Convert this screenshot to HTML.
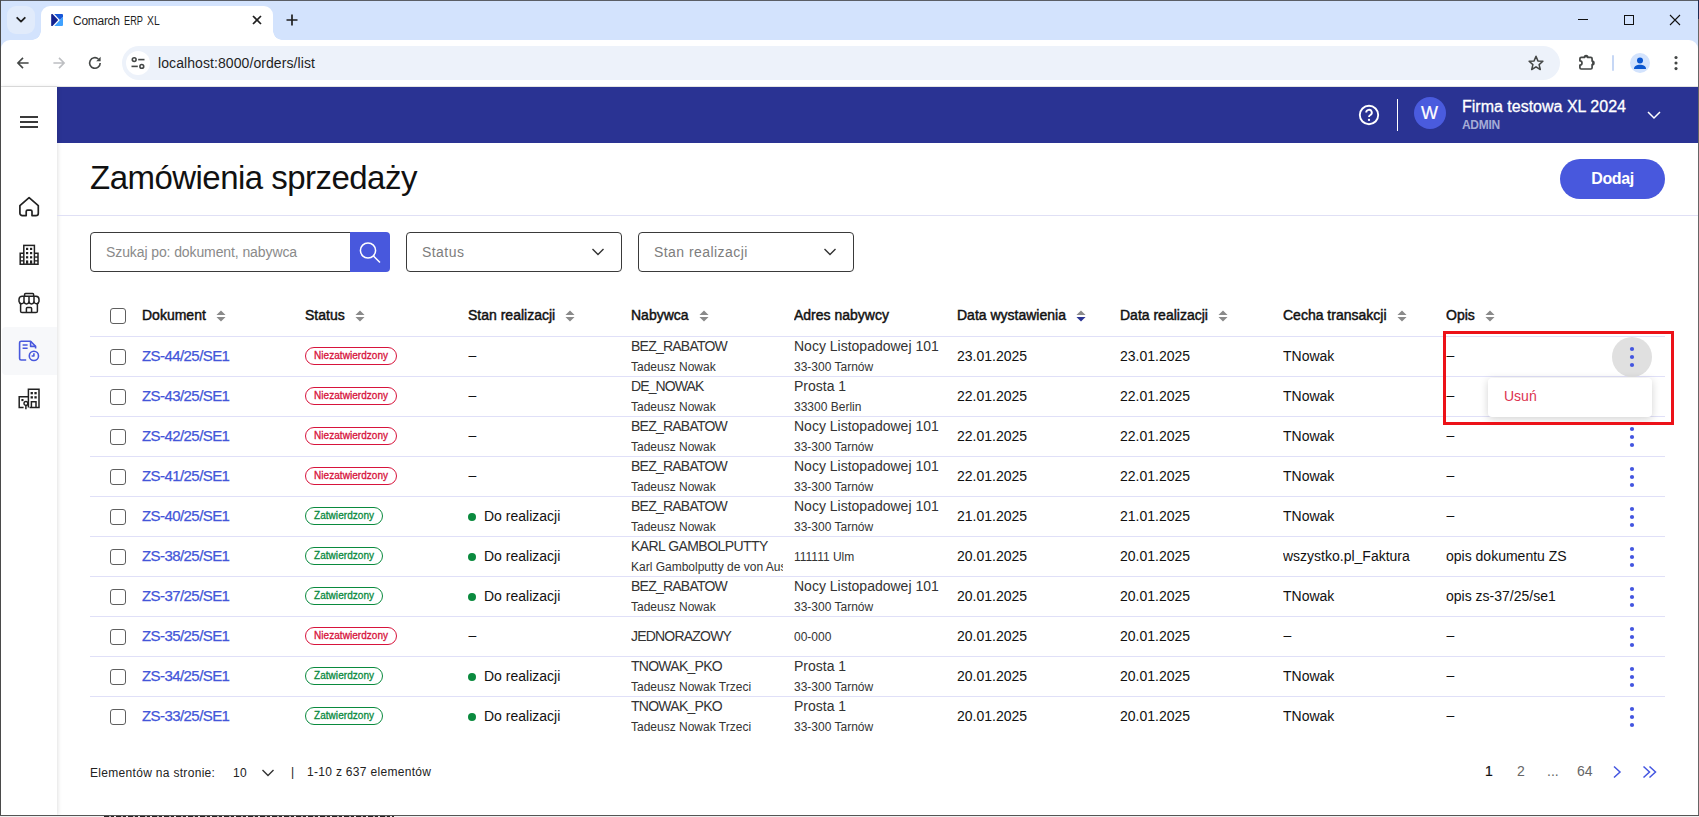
<!DOCTYPE html>
<html lang="pl">
<head>
<meta charset="utf-8">
<title>Comarch ERP XL</title>
<style>
*{box-sizing:border-box;margin:0;padding:0}
html,body{width:1699px;height:817px;overflow:hidden;background:#fff}
body{font-family:"Liberation Sans",sans-serif;position:relative;color:#111}
.abs{position:absolute}
/* window frame */
#frame-top{left:0;top:0;width:1699px;height:1px;background:#5a5e66}
#frame-left{left:0;top:0;width:1px;height:817px;background:#4a4a4a}
#frame-right{left:1698px;top:0;width:1px;height:817px;background:#666}
#frame-right2{left:1698px;top:0;width:1px;height:19px;background:#1b2b52}
#frame-bottom{left:0;top:815px;width:1699px;height:1px;background:#555}
#frame-bottom2{left:0;top:816px;width:1699px;height:1px;background:#f0f0f0}
/* browser chrome */
#tabstrip{left:1px;top:1px;width:1697px;height:50px;background:#d3e3fd}
#tabdd{left:7px;top:6px;width:28px;height:28px;border-radius:9px;background:#e1ebfb}
#tab{left:41px;top:6px;width:232px;height:34px;background:#fff;border-radius:9px 9px 0 0}
#tab:before,#tab:after{content:"";position:absolute;bottom:0;width:9px;height:9px}
#tab:before{left:-9px;background:radial-gradient(circle at 0 0,transparent 8.5px,#fff 9px)}
#tab:after{right:-9px;background:radial-gradient(circle at 100% 0,transparent 8.5px,#fff 9px)}
#tabtitle{left:73px;top:13px;font-size:12px;line-height:16px;color:#1f1f1f;white-space:nowrap}
#toolbar{left:1px;top:40px;width:1697px;height:46px;background:#fff;border-radius:9px 9px 0 0}
#toolbar-line{left:1px;top:86px;width:1697px;height:1px;background:#e3e3e3}
#urlpill{left:121.5px;top:46px;width:1438px;height:34px;border-radius:17px;background:#edf2fa}
#siteinfo{left:126px;top:51px;width:24px;height:24px;border-radius:12px;background:#fff}
#url{left:158px;top:54px;letter-spacing:.08px;font-size:14px;line-height:18px;color:#1f1f1f;white-space:nowrap}
/* app */
#sidebar{left:1px;top:87px;width:56px;height:728px;background:#fff;box-shadow:1px 0 4px rgba(0,0,0,.12)}
#side-active{left:2px;top:327px;width:55px;height:48px;background:#f7f8fa;border-radius:4px 0 0 4px}
#header{left:57px;top:87px;width:1641px;height:56px;background:#2a3393}
#title{left:90px;top:157px;font-size:33px;letter-spacing:-.53px;line-height:42px;color:#111;white-space:nowrap}
#hr{left:57px;top:215px;width:1641px;height:1px;background:#e0e0f5}

#avatar{left:1414px;top:97px;width:32px;height:32px;border-radius:16px;background:#4a5bde;color:#fff;font-size:18px;line-height:32px;text-align:center;-webkit-text-stroke:.2px #fff;padding-right:1px}
#firm{left:1462px;top:97px;-webkit-text-stroke:.3px #fff;font-size:16px;line-height:20px;color:#fff;white-space:nowrap}
#admin{left:1462px;top:118px;letter-spacing:-.3px;font-size:12px;line-height:14px;font-weight:bold;color:#a5abd6;white-space:nowrap}
#dodaj{left:1560px;top:159px;width:105px;height:40px;border-radius:20px;background:#4858dd;color:#fff;font-weight:bold;font-size:16px;line-height:40px;text-align:center;letter-spacing:-.4px}

#search{left:90px;top:232px;width:261px;height:40px;border:1px solid #3a3a3a;border-radius:4px 0 0 4px;font-size:14px;line-height:38px;padding-left:15px;color:#8a8a8a;white-space:nowrap;letter-spacing:-.1px}
#searchbtn{left:350px;top:232px;width:40px;height:40px;background:#4858dd;border-radius:0 4px 4px 0}
.sel{top:232px;width:216px;height:40px;border:1px solid #3a3a3a;border-radius:4px;font-size:14px;line-height:38px;padding-left:15px;color:#7d7d7d;white-space:nowrap;letter-spacing:.44px}
.sel svg{position:absolute;right:16px;top:14px}
#tbl{left:90px;top:296px;width:1575px}
.tr{display:flex;height:40px;border-top:1px solid #e0e0f8;align-items:center;font-size:14px;color:#333}
.tr.th{border-top:0;height:40px;color:#111}
.c0{width:52px;flex:none;padding-left:20px;display:flex;align-items:center}
.cb{display:block;width:16px;height:16px;border:1px solid #5f5f5f;border-radius:3px;background:#fff}
.c{width:152px;margin-right:11px;flex:none;display:flex;align-items:center;white-space:nowrap;overflow:hidden;height:39px;padding-bottom:1px}
.c.col{flex-direction:column;align-items:flex-start;justify-content:center}
.c b{position:relative;top:-1px;font-weight:normal;font-size:14px;letter-spacing:0;-webkit-text-stroke:.45px #111}
.sort{margin-left:10px;flex:none}
.ca{width:56px;flex:none;position:relative;height:39px}
.dots{position:absolute;left:20px;top:9px}
.hov{position:absolute;left:3px;top:0;width:40px;height:40px;border-radius:20px;background:#e0e0e0}
.lnk{position:relative;top:-1px;color:#4355d9;font-size:15px;-webkit-text-stroke:.25px #4355d9;letter-spacing:-.57px}
.bd{display:inline-block;height:18px;line-height:16px;border:1px solid;border-radius:9px;font-size:10px;padding:0 8px;font-weight:normal;letter-spacing:.05px;-webkit-text-stroke:.3px currentColor}
.bn{color:#d7143c;border-color:#d7143c}
.bz{color:#0a8a3e;border-color:#0a8a3e}
.gd{display:block;width:8px;height:8px;border-radius:4px;background:#0a8a3e;margin-right:8px;flex:none;position:relative;top:1px}
.t{font-size:14px;color:#111}
.ds{position:relative;top:-1px;left:.6px}
.l1{font-size:14px;line-height:20px;color:#333}
.l2{font-size:12px;line-height:20px;color:#333;position:relative;top:1px}
#menu{left:1488px;top:378px;width:164px;height:39px;background:#fff;border-radius:4px;box-shadow:0 2px 8px rgba(0,0,0,.18);font-size:14px;line-height:37px;padding-left:16px;color:#dc3250}
#redbox{left:1443px;top:331px;width:231px;height:94px;border:3px solid #ec1118}
.ft{top:764px;letter-spacing:.31px;font-size:12px;line-height:16px;color:#222;white-space:nowrap}
.pg{top:762px;font-size:14px;line-height:18px;color:#666;white-space:nowrap}
#tabtitle .sq{position:absolute;top:0;transform-origin:0 0;display:block}
</style>
</head>
<body>
<div class="abs" id="tabstrip"></div>
<div class="abs" id="tabdd"></div>
<div class="abs" id="tab"></div>
<div class="abs" id="tabtitle"><span style="letter-spacing:-.28px">Comarch</span> <span class="sq" style="left:51px;transform:scaleX(.77)">ERP</span> <span class="sq" style="left:74px;transform:scaleX(.86)">XL</span></div>
<div class="abs" id="toolbar"></div>
<div class="abs" id="toolbar-line"></div>
<div class="abs" id="urlpill"></div>
<div class="abs" id="siteinfo"></div>
<div class="abs" id="url">localhost:8000/orders/list</div>

<!-- browser chrome icons -->
<svg class="abs" style="left:15px;top:15px" width="12" height="10" viewBox="0 0 12 10"><path d="M2.2 2.8 L6 6.6 L9.8 2.8" fill="none" stroke="#1f1f1f" stroke-width="1.8" stroke-linecap="round" stroke-linejoin="round"/></svg>
<svg class="abs" style="left:51px;top:14px" width="12" height="12" viewBox="0 0 12 12"><rect width="12" height="12" rx="1" fill="#fff"/><path d="M3.3 12 L8.9 6 L12 2.6 V11 a1 1 0 0 1 -1 1 Z" fill="#40a2ff"/><path d="M3.3 0 H11 a1 1 0 0 1 1 1 V2.6 L8.9 6 Z" fill="#1757d8"/><path d="M0.2 0.6 Q0.2 0 0.8 0 H1.5 L7.2 6 L1.5 12 H0.8 Q0.2 12 0.2 11.4 Z" fill="#14228f"/></svg>
<svg class="abs" style="left:251px;top:14px" width="12" height="12" viewBox="0 0 12 12"><path d="M2 2 L10 10 M10 2 L2 10" stroke="#1f1f1f" stroke-width="1.7" stroke-linecap="butt"/></svg>
<svg class="abs" style="left:285px;top:13px" width="14" height="14" viewBox="0 0 14 14"><path d="M7 1.5 V12.5 M1.5 7 H12.5" stroke="#1f1f1f" stroke-width="1.7"/></svg>
<!-- window controls -->
<svg class="abs" style="left:1577px;top:14px" width="12" height="12" viewBox="0 0 12 12"><path d="M1 5.5 H11" stroke="#111" stroke-width="1"/></svg>
<svg class="abs" style="left:1623px;top:14px" width="12" height="12" viewBox="0 0 12 12"><rect x="1.5" y="1.5" width="9" height="9" fill="none" stroke="#111" stroke-width="1"/></svg>
<svg class="abs" style="left:1669px;top:14px" width="12" height="12" viewBox="0 0 12 12"><path d="M1 1 L11 11 M11 1 L1 11" stroke="#111" stroke-width="1.1"/></svg>
<!-- nav -->
<svg class="abs" style="left:15px;top:55px" width="16" height="16" viewBox="0 0 16 16"><path d="M13.6 8 H3 M8 2.9 L2.9 8 L8 13.1" fill="none" stroke="#444746" stroke-width="1.6" stroke-linejoin="miter"/></svg>
<svg class="abs" style="left:51px;top:55px" width="16" height="16" viewBox="0 0 16 16"><path d="M2.4 8 H13 M8 2.9 L13.1 8 L8 13.1" fill="none" stroke="#bdbfc2" stroke-width="1.6" stroke-linejoin="miter"/></svg>
<svg class="abs" style="left:87px;top:55px" width="16" height="16" viewBox="0 0 16 16"><path d="M13.2 8 A5.3 5.3 0 1 1 11.4 4" fill="none" stroke="#444746" stroke-width="1.6"/><path d="M13.6 1.8 V6.2 H9.2 Z" fill="#444746"/></svg>
<svg class="abs" style="left:130px;top:55px" width="16" height="16" viewBox="0 0 16 16"><g fill="none" stroke="#444746" stroke-width="1.6"><circle cx="4.2" cy="4.6" r="1.9"/><path d="M8.2 4.6 H14.5"/><circle cx="11.8" cy="11.4" r="1.9"/><path d="M1.5 11.4 H7.8"/></g></svg>
<svg class="abs" style="left:1527px;top:54px" width="18" height="18" viewBox="0 0 18 18"><path d="M9 2.2 L10.9 6.9 L15.9 7.3 L12.1 10.6 L13.3 15.5 L9 12.8 L4.7 15.5 L5.9 10.6 L2.1 7.3 L7.1 6.9 Z" fill="none" stroke="#444746" stroke-width="1.5" stroke-linejoin="round"/></svg>
<svg class="abs" style="left:1577px;top:53px" width="20" height="20" viewBox="0 0 20 20"><path d="M2.9 5.7 a1.3 1.3 0 0 1 1.3 -1.3 H7.3 a1.75 1.9 0 0 1 3.5 0 H13.8 a1.3 1.3 0 0 1 1.3 1.3 V8.1 a1.8 1.8 0 0 1 0 3.6 V14.7 a1.3 1.3 0 0 1 -1.3 1.3 H4.2 a1.3 1.3 0 0 1 -1.3 -1.3 V12 a2.1 2.1 0 0 0 0 -4.2 Z" fill="none" stroke="#444746" stroke-width="1.7" stroke-linejoin="round"/><path d="M7.3 4.4 a1.75 1.9 0 0 1 3.5 0 Z M15.1 8.1 a1.8 1.8 0 0 1 0 3.6 Z" fill="#444746"/></svg>
<div class="abs" style="left:1612px;top:55px;width:2px;height:16px;background:#c6d7f5;border-radius:1px"></div>
<div class="abs" style="left:1630px;top:53px;width:20px;height:20px;border-radius:10px;background:#d3e3fd;overflow:hidden"><svg width="20" height="20" viewBox="0 0 20 20"><circle cx="10" cy="7.6" r="3" fill="#0b57d0"/><path d="M4 15.8 C4 12.8 7 11.7 10 11.7 S16 12.8 16 15.8 V16 H4 Z" fill="#0b57d0"/></svg></div>
<svg class="abs" style="left:1673px;top:54px" width="6" height="18" viewBox="0 0 6 18"><g fill="#444746"><circle cx="3" cy="3.5" r="1.55"/><circle cx="3" cy="9" r="1.55"/><circle cx="3" cy="14.6" r="1.55"/></g></svg>
<div class="abs" id="header"></div>
<div class="abs" id="sidebar"></div>
<div class="abs" id="side-active"></div>
<div class="abs" id="title">Zamówienia sprzedaży</div>
<div class="abs" id="hr"></div>

<!-- app header -->
<svg class="abs" style="left:1357px;top:103px" width="24" height="24" viewBox="0 0 24 24"><circle cx="12" cy="12" r="9.2" fill="none" stroke="#fff" stroke-width="1.9"/><path d="M9.2 9.6 a2.8 2.8 0 1 1 4.2 2.4 c-.9 .55 -1.4 1 -1.4 2.1" fill="none" stroke="#fff" stroke-width="1.9"/><circle cx="12" cy="16.9" r="1.15" fill="#fff"/></svg>
<div class="abs" style="left:1397px;top:99px;width:1px;height:32px;background:#fff"></div>
<div class="abs" id="avatar">W</div>
<div class="abs" id="firm">Firma testowa XL 2024</div>
<div class="abs" id="admin">ADMIN</div>
<svg class="abs" style="left:1646px;top:108px" width="16" height="14" viewBox="0 0 16 14"><path d="M2 4 L8 10 L14 4" fill="none" stroke="#fff" stroke-width="1.5"/></svg>
<div class="abs" id="dodaj">Dodaj</div>
<!-- hamburger -->
<svg class="abs" style="left:20px;top:116px" width="18" height="12" viewBox="0 0 18 12"><path d="M0 0h18v2H0z M0 5h18v2H0z M0 10h18v2H0z" fill="#3a3a3a"/></svg>
<!-- filters -->
<div class="abs" id="search"><span>Szukaj po: dokument, nabywca</span></div>
<div class="abs" id="searchbtn"><svg width="40" height="40" viewBox="0 0 40 40"><circle cx="18" cy="18.5" r="7.6" fill="none" stroke="#fff" stroke-width="1.5"/><path d="M23.5 24 L30 30.5" stroke="#fff" stroke-width="1.5"/></svg></div>
<div class="abs sel" style="left:406px"><span>Status</span><svg width="14" height="10" viewBox="0 0 14 10"><path d="M1.5 2 L7 7.5 L12.5 2" fill="none" stroke="#333" stroke-width="1.4"/></svg></div>
<div class="abs sel" style="left:638px"><span>Stan realizacji</span><svg width="14" height="10" viewBox="0 0 14 10"><path d="M1.5 2 L7 7.5 L12.5 2" fill="none" stroke="#333" stroke-width="1.4"/></svg></div>
<!-- table -->
<div class="abs" id="tbl">
<div class="tr th"><div class="c0"><i class="cb"></i></div>
<div class="c"><b>Dokument</b><svg class="sort" width="10" height="12" viewBox="0 0 9 12" preserveAspectRatio="none"><path d="M4.5 0.6 L8.6 5 H0.4 Z M4.5 11.4 L8.6 7 H0.4 Z" fill="#8a8a8a"/></svg></div>
<div class="c"><b>Status</b><svg class="sort" width="10" height="12" viewBox="0 0 9 12" preserveAspectRatio="none"><path d="M4.5 0.6 L8.6 5 H0.4 Z M4.5 11.4 L8.6 7 H0.4 Z" fill="#8a8a8a"/></svg></div>
<div class="c"><b>Stan realizacji</b><svg class="sort" width="10" height="12" viewBox="0 0 9 12" preserveAspectRatio="none"><path d="M4.5 0.6 L8.6 5 H0.4 Z M4.5 11.4 L8.6 7 H0.4 Z" fill="#8a8a8a"/></svg></div>
<div class="c"><b>Nabywca</b><svg class="sort" width="10" height="12" viewBox="0 0 9 12" preserveAspectRatio="none"><path d="M4.5 0.6 L8.6 5 H0.4 Z M4.5 11.4 L8.6 7 H0.4 Z" fill="#8a8a8a"/></svg></div>
<div class="c"><b>Adres nabywcy</b></div>
<div class="c"><b>Data wystawienia</b><svg class="sort" width="10" height="12" viewBox="0 0 9 12" preserveAspectRatio="none"><path d="M4.5 0.6 L8.6 5 H0.4 Z" fill="#8a8a8a"/><path d="M4.5 11.4 L8.6 7 H0.4 Z" fill="#2a3393"/></svg></div>
<div class="c"><b>Data realizacji</b><svg class="sort" width="10" height="12" viewBox="0 0 9 12" preserveAspectRatio="none"><path d="M4.5 0.6 L8.6 5 H0.4 Z M4.5 11.4 L8.6 7 H0.4 Z" fill="#8a8a8a"/></svg></div>
<div class="c"><b>Cecha transakcji</b><svg class="sort" width="10" height="12" viewBox="0 0 9 12" preserveAspectRatio="none"><path d="M4.5 0.6 L8.6 5 H0.4 Z M4.5 11.4 L8.6 7 H0.4 Z" fill="#8a8a8a"/></svg></div>
<div class="c"><b>Opis</b><svg class="sort" width="10" height="12" viewBox="0 0 9 12" preserveAspectRatio="none"><path d="M4.5 0.6 L8.6 5 H0.4 Z M4.5 11.4 L8.6 7 H0.4 Z" fill="#8a8a8a"/></svg></div>
<div class="ca"></div></div>
<div class="tr"><div class="c0"><i class="cb"></i></div><div class="c"><a class="lnk">ZS-44/25/SE1</a></div><div class="c"><span class="bd bn">Niezatwierdzony</span></div><div class="c"><span class="t ds">–</span></div><div class="c col"><div class="l1" style="letter-spacing:-.77px">BEZ_RABATOW</div><div class="l2">Tadeusz Nowak</div></div><div class="c col"><div class="l1">Nocy Listopadowej 101</div><div class="l2">33-300 Tarnów</div></div><div class="c"><span class="t">23.01.2025</span></div><div class="c"><span class="t">23.01.2025</span></div><div class="c"><span class="t">TNowak</span></div><div class="c"><span class="t ds">–</span></div><div class="ca"><i class="hov"></i><svg class="dots" width="6" height="22" viewBox="0 0 6 22"><g fill="#4355e0"><circle cx="3" cy="3" r="2.1"/><circle cx="3" cy="11" r="2.1"/><circle cx="3" cy="19" r="2.1"/></g></svg></div></div>
<div class="tr"><div class="c0"><i class="cb"></i></div><div class="c"><a class="lnk">ZS-43/25/SE1</a></div><div class="c"><span class="bd bn">Niezatwierdzony</span></div><div class="c"><span class="t ds">–</span></div><div class="c col"><div class="l1" style="letter-spacing:-.9px">DE_NOWAK</div><div class="l2">Tadeusz Nowak</div></div><div class="c col"><div class="l1">Prosta 1</div><div class="l2">33300 Berlin</div></div><div class="c"><span class="t">22.01.2025</span></div><div class="c"><span class="t">22.01.2025</span></div><div class="c"><span class="t">TNowak</span></div><div class="c"><span class="t ds">–</span></div><div class="ca"><svg class="dots" width="6" height="22" viewBox="0 0 6 22"><g fill="#4355e0"><circle cx="3" cy="3" r="2.1"/><circle cx="3" cy="11" r="2.1"/><circle cx="3" cy="19" r="2.1"/></g></svg></div></div>
<div class="tr"><div class="c0"><i class="cb"></i></div><div class="c"><a class="lnk">ZS-42/25/SE1</a></div><div class="c"><span class="bd bn">Niezatwierdzony</span></div><div class="c"><span class="t ds">–</span></div><div class="c col"><div class="l1" style="letter-spacing:-.77px">BEZ_RABATOW</div><div class="l2">Tadeusz Nowak</div></div><div class="c col"><div class="l1">Nocy Listopadowej 101</div><div class="l2">33-300 Tarnów</div></div><div class="c"><span class="t">22.01.2025</span></div><div class="c"><span class="t">22.01.2025</span></div><div class="c"><span class="t">TNowak</span></div><div class="c"><span class="t ds">–</span></div><div class="ca"><svg class="dots" width="6" height="22" viewBox="0 0 6 22"><g fill="#4355e0"><circle cx="3" cy="3" r="2.1"/><circle cx="3" cy="11" r="2.1"/><circle cx="3" cy="19" r="2.1"/></g></svg></div></div>
<div class="tr"><div class="c0"><i class="cb"></i></div><div class="c"><a class="lnk">ZS-41/25/SE1</a></div><div class="c"><span class="bd bn">Niezatwierdzony</span></div><div class="c"><span class="t ds">–</span></div><div class="c col"><div class="l1" style="letter-spacing:-.77px">BEZ_RABATOW</div><div class="l2">Tadeusz Nowak</div></div><div class="c col"><div class="l1">Nocy Listopadowej 101</div><div class="l2">33-300 Tarnów</div></div><div class="c"><span class="t">22.01.2025</span></div><div class="c"><span class="t">22.01.2025</span></div><div class="c"><span class="t">TNowak</span></div><div class="c"><span class="t ds">–</span></div><div class="ca"><svg class="dots" width="6" height="22" viewBox="0 0 6 22"><g fill="#4355e0"><circle cx="3" cy="3" r="2.1"/><circle cx="3" cy="11" r="2.1"/><circle cx="3" cy="19" r="2.1"/></g></svg></div></div>
<div class="tr"><div class="c0"><i class="cb"></i></div><div class="c"><a class="lnk">ZS-40/25/SE1</a></div><div class="c"><span class="bd bz">Zatwierdzony</span></div><div class="c"><i class="gd"></i><span class="t">Do realizacji</span></div><div class="c col"><div class="l1" style="letter-spacing:-.77px">BEZ_RABATOW</div><div class="l2">Tadeusz Nowak</div></div><div class="c col"><div class="l1">Nocy Listopadowej 101</div><div class="l2">33-300 Tarnów</div></div><div class="c"><span class="t">21.01.2025</span></div><div class="c"><span class="t">21.01.2025</span></div><div class="c"><span class="t">TNowak</span></div><div class="c"><span class="t ds">–</span></div><div class="ca"><svg class="dots" width="6" height="22" viewBox="0 0 6 22"><g fill="#4355e0"><circle cx="3" cy="3" r="2.1"/><circle cx="3" cy="11" r="2.1"/><circle cx="3" cy="19" r="2.1"/></g></svg></div></div>
<div class="tr"><div class="c0"><i class="cb"></i></div><div class="c"><a class="lnk">ZS-38/25/SE1</a></div><div class="c"><span class="bd bz">Zatwierdzony</span></div><div class="c"><i class="gd"></i><span class="t">Do realizacji</span></div><div class="c col"><div class="l1" style="letter-spacing:-.56px">KARL GAMBOLPUTTY</div><div class="l2">Karl Gambolputty de von Ausfern</div></div><div class="c col"><div class="l2">111111 Ulm</div></div><div class="c"><span class="t">20.01.2025</span></div><div class="c"><span class="t">20.01.2025</span></div><div class="c"><span class="t">wszystko.pl_Faktura</span></div><div class="c"><span class="t">opis dokumentu ZS</span></div><div class="ca"><svg class="dots" width="6" height="22" viewBox="0 0 6 22"><g fill="#4355e0"><circle cx="3" cy="3" r="2.1"/><circle cx="3" cy="11" r="2.1"/><circle cx="3" cy="19" r="2.1"/></g></svg></div></div>
<div class="tr"><div class="c0"><i class="cb"></i></div><div class="c"><a class="lnk">ZS-37/25/SE1</a></div><div class="c"><span class="bd bz">Zatwierdzony</span></div><div class="c"><i class="gd"></i><span class="t">Do realizacji</span></div><div class="c col"><div class="l1" style="letter-spacing:-.77px">BEZ_RABATOW</div><div class="l2">Tadeusz Nowak</div></div><div class="c col"><div class="l1">Nocy Listopadowej 101</div><div class="l2">33-300 Tarnów</div></div><div class="c"><span class="t">20.01.2025</span></div><div class="c"><span class="t">20.01.2025</span></div><div class="c"><span class="t">TNowak</span></div><div class="c"><span class="t">opis zs-37/25/se1</span></div><div class="ca"><svg class="dots" width="6" height="22" viewBox="0 0 6 22"><g fill="#4355e0"><circle cx="3" cy="3" r="2.1"/><circle cx="3" cy="11" r="2.1"/><circle cx="3" cy="19" r="2.1"/></g></svg></div></div>
<div class="tr"><div class="c0"><i class="cb"></i></div><div class="c"><a class="lnk">ZS-35/25/SE1</a></div><div class="c"><span class="bd bn">Niezatwierdzony</span></div><div class="c"><span class="t ds">–</span></div><div class="c col"><div class="l1" style="letter-spacing:-.8px">JEDNORAZOWY</div></div><div class="c col"><div class="l2">00-000</div></div><div class="c"><span class="t">20.01.2025</span></div><div class="c"><span class="t">20.01.2025</span></div><div class="c"><span class="t ds">–</span></div><div class="c"><span class="t ds">–</span></div><div class="ca"><svg class="dots" width="6" height="22" viewBox="0 0 6 22"><g fill="#4355e0"><circle cx="3" cy="3" r="2.1"/><circle cx="3" cy="11" r="2.1"/><circle cx="3" cy="19" r="2.1"/></g></svg></div></div>
<div class="tr"><div class="c0"><i class="cb"></i></div><div class="c"><a class="lnk">ZS-34/25/SE1</a></div><div class="c"><span class="bd bz">Zatwierdzony</span></div><div class="c"><i class="gd"></i><span class="t">Do realizacji</span></div><div class="c col"><div class="l1" style="letter-spacing:-.73px">TNOWAK_PKO</div><div class="l2">Tadeusz Nowak Trzeci</div></div><div class="c col"><div class="l1">Prosta 1</div><div class="l2">33-300 Tarnów</div></div><div class="c"><span class="t">20.01.2025</span></div><div class="c"><span class="t">20.01.2025</span></div><div class="c"><span class="t">TNowak</span></div><div class="c"><span class="t ds">–</span></div><div class="ca"><svg class="dots" width="6" height="22" viewBox="0 0 6 22"><g fill="#4355e0"><circle cx="3" cy="3" r="2.1"/><circle cx="3" cy="11" r="2.1"/><circle cx="3" cy="19" r="2.1"/></g></svg></div></div>
<div class="tr"><div class="c0"><i class="cb"></i></div><div class="c"><a class="lnk">ZS-33/25/SE1</a></div><div class="c"><span class="bd bz">Zatwierdzony</span></div><div class="c"><i class="gd"></i><span class="t">Do realizacji</span></div><div class="c col"><div class="l1" style="letter-spacing:-.73px">TNOWAK_PKO</div><div class="l2">Tadeusz Nowak Trzeci</div></div><div class="c col"><div class="l1">Prosta 1</div><div class="l2">33-300 Tarnów</div></div><div class="c"><span class="t">20.01.2025</span></div><div class="c"><span class="t">20.01.2025</span></div><div class="c"><span class="t">TNowak</span></div><div class="c"><span class="t ds">–</span></div><div class="ca"><svg class="dots" width="6" height="22" viewBox="0 0 6 22"><g fill="#4355e0"><circle cx="3" cy="3" r="2.1"/><circle cx="3" cy="11" r="2.1"/><circle cx="3" cy="19" r="2.1"/></g></svg></div></div>
</div>
<!-- popup + highlight -->
<div class="abs" id="menu"><span>Usuń</span></div>
<div class="abs" id="redbox"></div>
<!-- footer -->
<div class="abs ft" style="left:90px;top:765px">Elementów na stronie:</div>
<div class="abs ft" style="left:233px;top:765px">10</div>
<svg class="abs" style="left:261px;top:768px" width="14" height="10" viewBox="0 0 14 10"><path d="M1.5 2 L7 7.5 L12.5 2" fill="none" stroke="#333" stroke-width="1.4"/></svg>
<div class="abs ft" style="left:291px">|</div>
<div class="abs ft" style="left:307px">1-10 z 637 elementów</div>
<div class="abs pg" style="left:1485px;color:#111;-webkit-text-stroke:.2px #111">1</div>
<div class="abs pg" style="left:1517px">2</div>
<div class="abs pg" style="left:1547px">...</div>
<div class="abs pg" style="left:1577px">64</div>
<svg class="abs" style="left:1610px;top:764px" width="14" height="16" viewBox="0 0 14 16"><path d="M4 2.5 L10 8 L4 13.5" fill="none" stroke="#4355e0" stroke-width="1.5"/></svg>
<svg class="abs" style="left:1640px;top:764px" width="18" height="16" viewBox="0 0 18 16"><path d="M3.5 2.5 L9.5 8 L3.5 13.5 M9.5 2.5 L15.5 8 L9.5 13.5" fill="none" stroke="#4355e0" stroke-width="1.5"/></svg>

<!-- sidebar icons -->
<svg class="abs" style="left:17px;top:195px" width="24" height="24" viewBox="0 0 24 24"><path d="M12.1 2.7 L21.3 10.6 V18.2 a2.4 2.4 0 0 1 -2.4 2.4 H15 V16.6 a1.4 1.4 0 0 0 -1.4 -1.4 h-3 a1.4 1.4 0 0 0 -1.4 1.4 V20.6 H5.3 a2.4 2.4 0 0 1 -2.4 -2.4 V10.6 Z" fill="none" stroke="#222" stroke-width="1.7" stroke-linejoin="round"/></svg>
<svg class="abs" style="left:17px;top:243px" width="24" height="24" viewBox="0 0 24 24"><g fill="none" stroke="#222" stroke-width="1.5"><rect x="6.8" y="2.4" width="10.6" height="18.8"/><path d="M6.8 10.2 H3.2 V21.2 H6.8 M17.4 10.2 H21 V21.2 H17.4"/></g><g fill="#222"><rect x="9" y="4.8" width="2.2" height="2.2"/><rect x="13" y="4.8" width="2.2" height="2.2"/><rect x="9" y="9" width="2.2" height="2.2"/><rect x="13" y="9" width="2.2" height="2.2"/><rect x="9" y="13.2" width="2.2" height="2.2"/><rect x="13" y="13.2" width="2.2" height="2.2"/><rect x="9" y="17.4" width="2.2" height="3.4"/><rect x="13" y="17.4" width="2.2" height="3.4"/><rect x="3.2" y="13.4" width="3.6" height="1.3"/><rect x="3.2" y="17.2" width="3.6" height="1.3"/><rect x="17.4" y="13.4" width="3.6" height="1.3"/><rect x="17.4" y="17.2" width="3.6" height="1.3"/></g></svg>
<svg class="abs" style="left:17px;top:291px" width="24" height="24" viewBox="0 0 24 24"><g fill="none" stroke="#222" stroke-width="1.5" stroke-linejoin="round"><path d="M7.6 5.2 V3.4 a.9 .9 0 0 1 .9 -.9 h7.2 a.9 .9 0 0 1 .9 .9 V5.2"/><path d="M5.2 5.2 H19 a3.2 3.2 0 0 1 3 3.2 V10.4 a2.6 2.6 0 0 1 -5 .6 a2.6 2.6 0 0 1 -5 0 a2.6 2.6 0 0 1 -5 0 a2.6 2.6 0 0 1 -5 -.6 V8.4 a3.2 3.2 0 0 1 3.2 -3.2 Z"/><path d="M7 5.2 V11 M12 5.2 V11 M17 5.2 V11"/><path d="M3.6 12.4 V20.2 a1.4 1.4 0 0 0 1.4 1.4 H19 a1.4 1.4 0 0 0 1.4 -1.4 V12.4"/><path d="M9.4 21.6 V17.4 a1 1 0 0 1 1 -1 h3.2 a1 1 0 0 1 1 1 V21.6"/></g></svg>
<svg class="abs" style="left:17px;top:339px" width="24" height="24" viewBox="0 0 24 24"><g fill="none" stroke="#4858dd" stroke-width="1.6" stroke-linejoin="round"><path d="M9.2 21 H4.2 a1.6 1.6 0 0 1 -1.6 -1.6 V3.8 a1.6 1.6 0 0 1 1.6 -1.6 H13.6 L18.6 7.4 V9.6"/><path d="M13.6 2.2 V7.4 H18.6"/><path d="M5.6 6 H10.6 M5.6 9.2 H10.6"/><circle cx="16.9" cy="16.9" r="4.6"/><path d="M16.9 14.2 V17 H14.6"/></g></svg>
<svg class="abs" style="left:17px;top:387px" width="24" height="24" viewBox="0 0 24 24"><g fill="none" stroke="#222" stroke-width="1.5"><path d="M11.4 20.6 V2.2 H22 V20.6 H12.6"/><path d="M6.6 20.6 H2.2 V9.8 H11.4"/><path d="M14.4 20.6 V14.8 H19 V20.6"/><path d="M8.9 18 V22.2"/></g><circle cx="8.9" cy="16.4" r="1.9" fill="#fff" stroke="#222" stroke-width="1.4"/><g fill="#222"><rect x="13.6" y="5" width="2.3" height="2.3"/><rect x="17.4" y="5" width="2.3" height="2.3"/><rect x="13.6" y="9.2" width="2.3" height="2.3"/><rect x="17.4" y="9.2" width="2.3" height="2.3"/><rect x="4.4" y="12" width="2.1" height="2.1"/></g></svg>
<!--CONTENT-->
<div class="abs" id="frame-top"></div>
<div class="abs" id="frame-left"></div>
<div class="abs" id="frame-right"></div>
<div class="abs" id="frame-right2"></div>
<div class="abs" id="frame-bottom"></div>
<div class="abs" id="frame-bottom2"></div>
<div class="abs" style="left:104px;top:816px;width:290px;height:1px;background:repeating-linear-gradient(90deg,#222 0 5px,#bbb 5px 7px,#222 7px 10px,#eee 10px 12px)"></div>
</body>
</html>
